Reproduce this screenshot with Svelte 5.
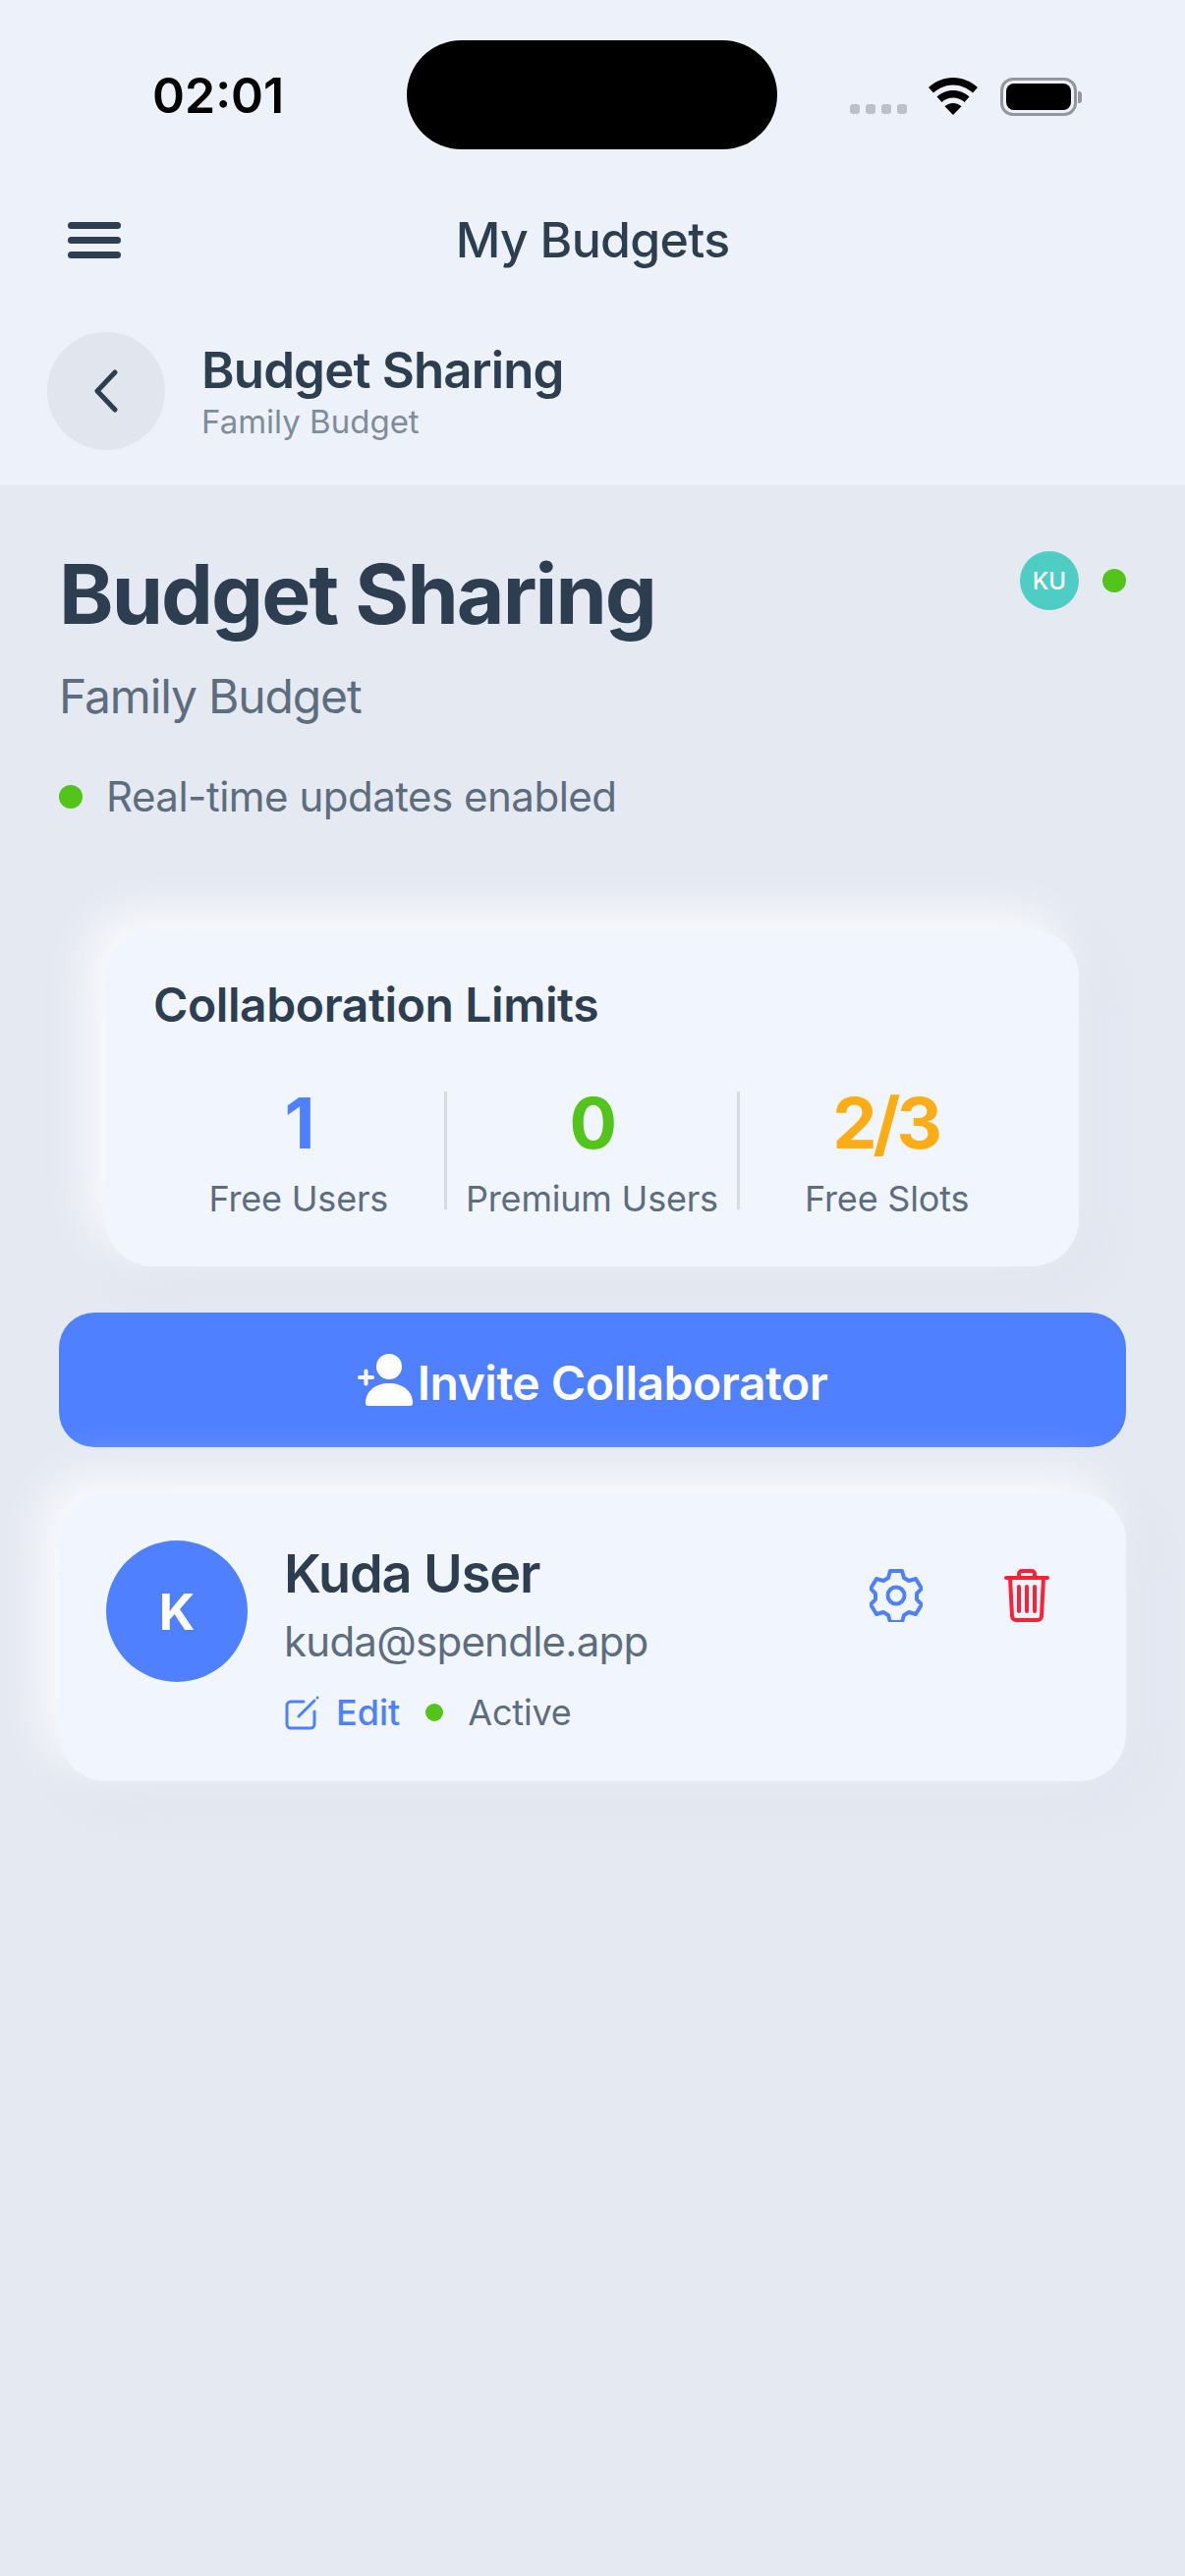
<script>
  const limits = [
    { value: "1", label: "Free Users", tone: "blue" },
    { value: "0", label: "Premium Users", tone: "green" },
    { value: "2/3", label: "Free Slots", tone: "orange" }
  ];
</script>

<div class="screen">
  <header class="top">
    <div class="status">
      <span class="time">02:01</span>
      <div class="island"></div>
      <div class="status-icons">
        <div class="signal"><i></i><i></i><i></i><i></i></div>
        <svg class="wifi" width="50" height="38" viewBox="0 0 50 38">
          <path d="M25 0C15.500 0 7 3.700 0 10l5 5.500C10.500 10.500 17.500 7.500 25 7.500s14.500 3 20 8L50 10C43 3.700 34.500 0 25 0z" />
          <path d="M25 13c-6.500 0-12 2.500-16.500 6.500l5 5.500c3-2.800 7-4.500 11.500-4.500s8.500 1.700 11.500 4.500l5-5.500C37 15.500 31.500 13 25 13z" />
          <path d="M25 26c-3.500 0-6.500 1.300-8.500 3.300L25 38l8.500-8.700C31.500 27.300 28.500 26 25 26z" />
        </svg>
        <div class="battery"><div class="battery-fill"></div></div>
        <div class="battery-cap"></div>
      </div>
    </div>

    <div class="nav">
      <button class="menu" aria-label="Menu"><i></i><i></i><i></i></button>
      <h2 class="nav-title">My Budgets</h2>
    </div>

    <div class="crumb">
      <button class="back" aria-label="Back">
        <svg width="30" height="44" viewBox="0 0 30 44" fill="none" stroke="#2c3e50" stroke-width="5" stroke-linecap="round" stroke-linejoin="round">
          <path d="M24 3 6 22l18 19" />
        </svg>
      </button>
      <div class="crumb-text">
        <div class="crumb-title">Budget Sharing</div>
        <div class="crumb-sub">Family Budget</div>
      </div>
    </div>
  </header>

  <main class="body">
    <section class="intro">
      <div class="intro-text">
        <h1>Budget Sharing</h1>
        <p class="sub">Family Budget</p>
        <div class="realtime"><span class="dot"></span>Real-time updates enabled</div>
      </div>
      <div class="presence">
        <div class="mini-avatar">KU</div>
        <span class="dot"></span>
      </div>
    </section>

    <section class="limits">
      <h3>Collaboration Limits</h3>
      <div class="limit-row">
        {#each limits as item}
          <div class="limit">
            <div class="limit-value {item.tone}">{item.value}</div>
            <div class="limit-label">{item.label}</div>
          </div>
        {/each}
      </div>
    </section>

    <button class="invite">
      <svg width="57" height="53" viewBox="0 0 57 53" fill="#fff">
        <circle cx="32" cy="13" r="13" />
        <path d="M8 50C8 38 18 30 32 30s24 8 24 20a3 3 0 0 1-3 3H11a3 3 0 0 1-3-3z" />
        <rect x="0" y="22" width="17" height="4" rx="2" />
        <rect x="6.500" y="15.500" width="4" height="17" rx="2" />
      </svg>
      <span class="invite-label">Invite Collaborator</span>
    </button>

    <section class="member">
      <div class="avatar">K</div>
      <div class="member-info">
        <div class="member-name">Kuda User</div>
        <div class="member-email">kuda@spendle.app</div>
        <div class="member-meta">
          <svg width="36" height="36" viewBox="0 0 36 36" fill="none" stroke="#4f80ff" stroke-width="3" stroke-linecap="round" stroke-linejoin="round">
            <path d="M20 7H7a4 4 0 0 0-4 4v19a4 4 0 0 0 4 4h20a4 4 0 0 0 4-4V17" />
            <path d="M15 22 31 6" />
            <path d="M34 3h.01" />
          </svg>
          <span class="edit">Edit</span>
          <span class="dot"></span>
          <span class="active">Active</span>
        </div>
      </div>
      <div class="actions">
        <svg width="54" height="54" viewBox="0 0 54 54" fill="none" stroke="#4f80ff" stroke-width="4" stroke-linejoin="round">
          <path d="M21 2h12l2 7 5 3 7-2 6 10-5 5v6l5 5-6 10-7-2-5 3-2 7H21l-2-7-5-3-7 2-6-10 5-5v-6l-5-5 6-10 7 2 5-3z" />
          <circle cx="27" cy="27" r="8.500" />
        </svg>
        <svg width="46" height="54" viewBox="0 0 46 54" fill="none" stroke="#ff2033" stroke-width="4" stroke-linecap="round" stroke-linejoin="round">
          <path d="M2 9h42" />
          <path d="M15 8V5a3 3 0 0 1 3-3h10a3 3 0 0 1 3 3v3" />
          <path d="M6 9l2 39a4 4 0 0 0 4 4h22a4 4 0 0 0 4-4l2-39" />
          <path d="M15 18v25M23 18v25M31 18v25" />
        </svg>
      </div>
    </section>
  </main>
</div>

<style>
  :global(body) {
    margin: 0;
    background: #e5e9f2;
  }

  .screen {
    width: 1206px;
    height: 2622px;
    display: flex;
    flex-direction: column;
    background: #e5e9f2;
    font-family: Inter, "Noto Sans", sans-serif;
    color: #2c3e50;
    overflow: hidden;
  }

  button {
    border: none;
    font-family: inherit;
    padding: 0;
  }

  h1, h2, h3, p {
    margin: 0;
  }

  .top {
    background: #ecf1fa;
    height: 496px;
    flex-shrink: 0;
    display: flex;
    flex-direction: column;
    border-bottom: 2px solid #e2e7f0;
    box-sizing: border-box;
  }

  .status {
    display: flex;
    align-items: flex-start;
    height: 192px;
    padding-top: 41px;
    box-sizing: border-box;
  }

  .time {
    width: 414px;
    padding: 26px 0 0 155px;
    box-sizing: border-box;
    color: #000;
    font-size: 50px;
    font-weight: 600;
    line-height: 60px;
  }

  .island {
    width: 377px;
    height: 111px;
    border-radius: 56px;
    background: #000;
  }

  .status-icons {
    display: flex;
    align-items: flex-end;
    margin-left: 74px;
    margin-top: 36px;
    height: 42px;
  }

  .signal {
    display: flex;
    gap: 6px;
    margin-bottom: 3px;
  }

  .signal i {
    width: 10px;
    height: 10px;
    border-radius: 3px;
    background: #bcc0c8;
  }

  .wifi {
    fill: #000;
    margin-left: 22px;
    margin-right: 23px;
    margin-bottom: 2px;
  }

  .battery {
    width: 78px;
    height: 39px;
    border: 3px solid #95979e;
    border-radius: 13px;
    box-sizing: border-box;
    padding: 3px;
    margin-bottom: 1px;
  }

  .battery-fill {
    height: 100%;
    background: #000;
    border-radius: 8px;
  }

  .battery-cap {
    width: 4px;
    height: 12px;
    margin: 0 0 14px 1px;
    background: #95979e;
    border-radius: 0 3px 3px 0;
  }

  .nav {
    position: relative;
    height: 104px;
    display: flex;
    align-items: center;
    justify-content: center;
  }

  .menu {
    position: absolute;
    left: 69px;
    top: 34px;
    width: 54px;
    display: flex;
    flex-direction: column;
    gap: 8px;
    background: none;
  }

  .menu i {
    height: 7px;
    border-radius: 4px;
    background: #2c3e50;
  }

  .nav-title {
    font-size: 50px;
    font-weight: 550;
    line-height: 60px;
    letter-spacing: -0.7px;
  }

  .crumb {
    display: flex;
    align-items: center;
    gap: 37px;
    padding: 42px 48px 0;
  }

  .back {
    width: 120px;
    height: 120px;
    border-radius: 50%;
    background: #e0e5ee;
    display: flex;
    align-items: center;
    justify-content: center;
  }

  .crumb-text {
    padding-top: 2px;
  }

  .crumb-title {
    font-size: 51px;
    font-weight: 600;
    line-height: 60px;
    letter-spacing: -0.85px;
  }

  .crumb-sub {
    font-size: 33px;
    line-height: 44px;
    color: #7f8c9b;
  }

  .body {
    padding: 59px 60px 60px;
    display: flex;
    flex-direction: column;
  }

  .intro {
    display: flex;
    justify-content: space-between;
    align-items: flex-start;
  }

  h1 {
    font-size: 84px;
    font-weight: 700;
    line-height: 100px;
    letter-spacing: -1.9px;
  }

  .sub {
    font-size: 48px;
    line-height: 60px;
    margin-top: 24px;
    letter-spacing: -1.15px;
    color: #5d6d7e;
  }

  .realtime {
    display: flex;
    align-items: center;
    gap: 24px;
    margin-top: 42px;
    font-size: 42px;
    line-height: 60px;
    letter-spacing: -0.5px;
    color: #5d6d7e;
  }

  .dot {
    display: block;
    width: 24px;
    height: 24px;
    border-radius: 50%;
    background: #52c41a;
    flex-shrink: 0;
  }

  .presence {
    display: flex;
    align-items: center;
    gap: 24px;
    margin-top: 6px;
  }

  .mini-avatar {
    width: 60px;
    height: 60px;
    border-radius: 50%;
    background: #4ecdc4;
    color: #fff;
    font-size: 24px;
    font-weight: 500;
    display: flex;
    align-items: center;
    justify-content: center;
  }

  .limits {
    margin: 105px 48px 0 47px;
    height: 343px;
    box-sizing: border-box;
    padding: 47px 46px 0 49px;
    background: #f0f5fe;
    border-radius: 48px;
    box-shadow: -16px -16px 48px rgba(255, 255, 255, 0.85), 16px 16px 48px rgba(209, 217, 230, 0.25);
  }

  h3 {
    font-size: 48px;
    font-weight: 600;
    line-height: 60px;
    letter-spacing: -0.4px;
  }

  .limit-row {
    display: grid;
    grid-template-columns: repeat(3, 1fr);
    margin-top: 58px;
  }

  .limit {
    text-align: center;
    height: 120px;
    border-right: 3px solid #d5dae3;
  }

  .limit:last-child {
    border-right: none;
  }

  .limit-value {
    font-size: 72px;
    font-weight: 700;
    line-height: 72px;
    margin-top: -4px;
    letter-spacing: -2.5px;
  }

  .limit-value.orange {
    letter-spacing: -4px;
    padding-right: 3px;
  }

  .blue { color: #4f80ff; }
  .green { color: #52c41a; }
  .orange { color: #faad14; }

  .limit-label {
    font-size: 36px;
    line-height: 48px;
    margin-top: 17px;
    letter-spacing: -0.2px;
    color: #5d6d7e;
  }

  .invite {
    margin-top: 47px;
    height: 137px;
    border-radius: 36px;
    background: #4f80ff;
    color: #fff;
    font-size: 48px;
    font-weight: 600;
    letter-spacing: -0.5px;
    display: flex;
    align-items: center;
    justify-content: center;
    gap: 4px;
  }

  .invite-label {
    padding-top: 6px;
  }

  .member {
    margin-top: 47px;
    height: 293px;
    box-sizing: border-box;
    padding: 48px;
    background: #f0f5fe;
    border-radius: 48px;
    box-shadow: -16px -16px 48px rgba(255, 255, 255, 0.85), 16px 16px 48px rgba(209, 217, 230, 0.25);
    display: flex;
    align-items: flex-start;
  }

  .avatar {
    width: 144px;
    height: 144px;
    border-radius: 50%;
    background: #4f80ff;
    color: #fff;
    font-size: 51px;
    font-weight: 700;
    display: flex;
    align-items: center;
    justify-content: center;
    flex-shrink: 0;
  }

  .member-info {
    margin-left: 37px;
    flex: 1;
  }

  .member-name {
    font-size: 54px;
    font-weight: 600;
    line-height: 66px;
    margin-top: 1px;
    letter-spacing: -1.1px;
  }

  .member-email {
    font-size: 42px;
    line-height: 54px;
    margin-top: 9px;
    letter-spacing: -0.75px;
    color: #5d6d7e;
  }

  .member-meta {
    display: flex;
    align-items: center;
    margin-top: 23px;
    font-size: 36px;
    line-height: 44px;
  }

  .edit {
    margin-left: 17px;
    margin-right: 26px;
    color: #4f80ff;
    font-weight: 500;
  }

  .member-meta .dot {
    width: 18px;
    height: 18px;
  }

  .active {
    margin-left: 25px;
    letter-spacing: -0.2px;
    color: #5d6d7e;
  }

  .actions {
    display: flex;
    align-items: center;
    gap: 83px;
    margin: 29px 30px 0 -1px;
  }
</style>
